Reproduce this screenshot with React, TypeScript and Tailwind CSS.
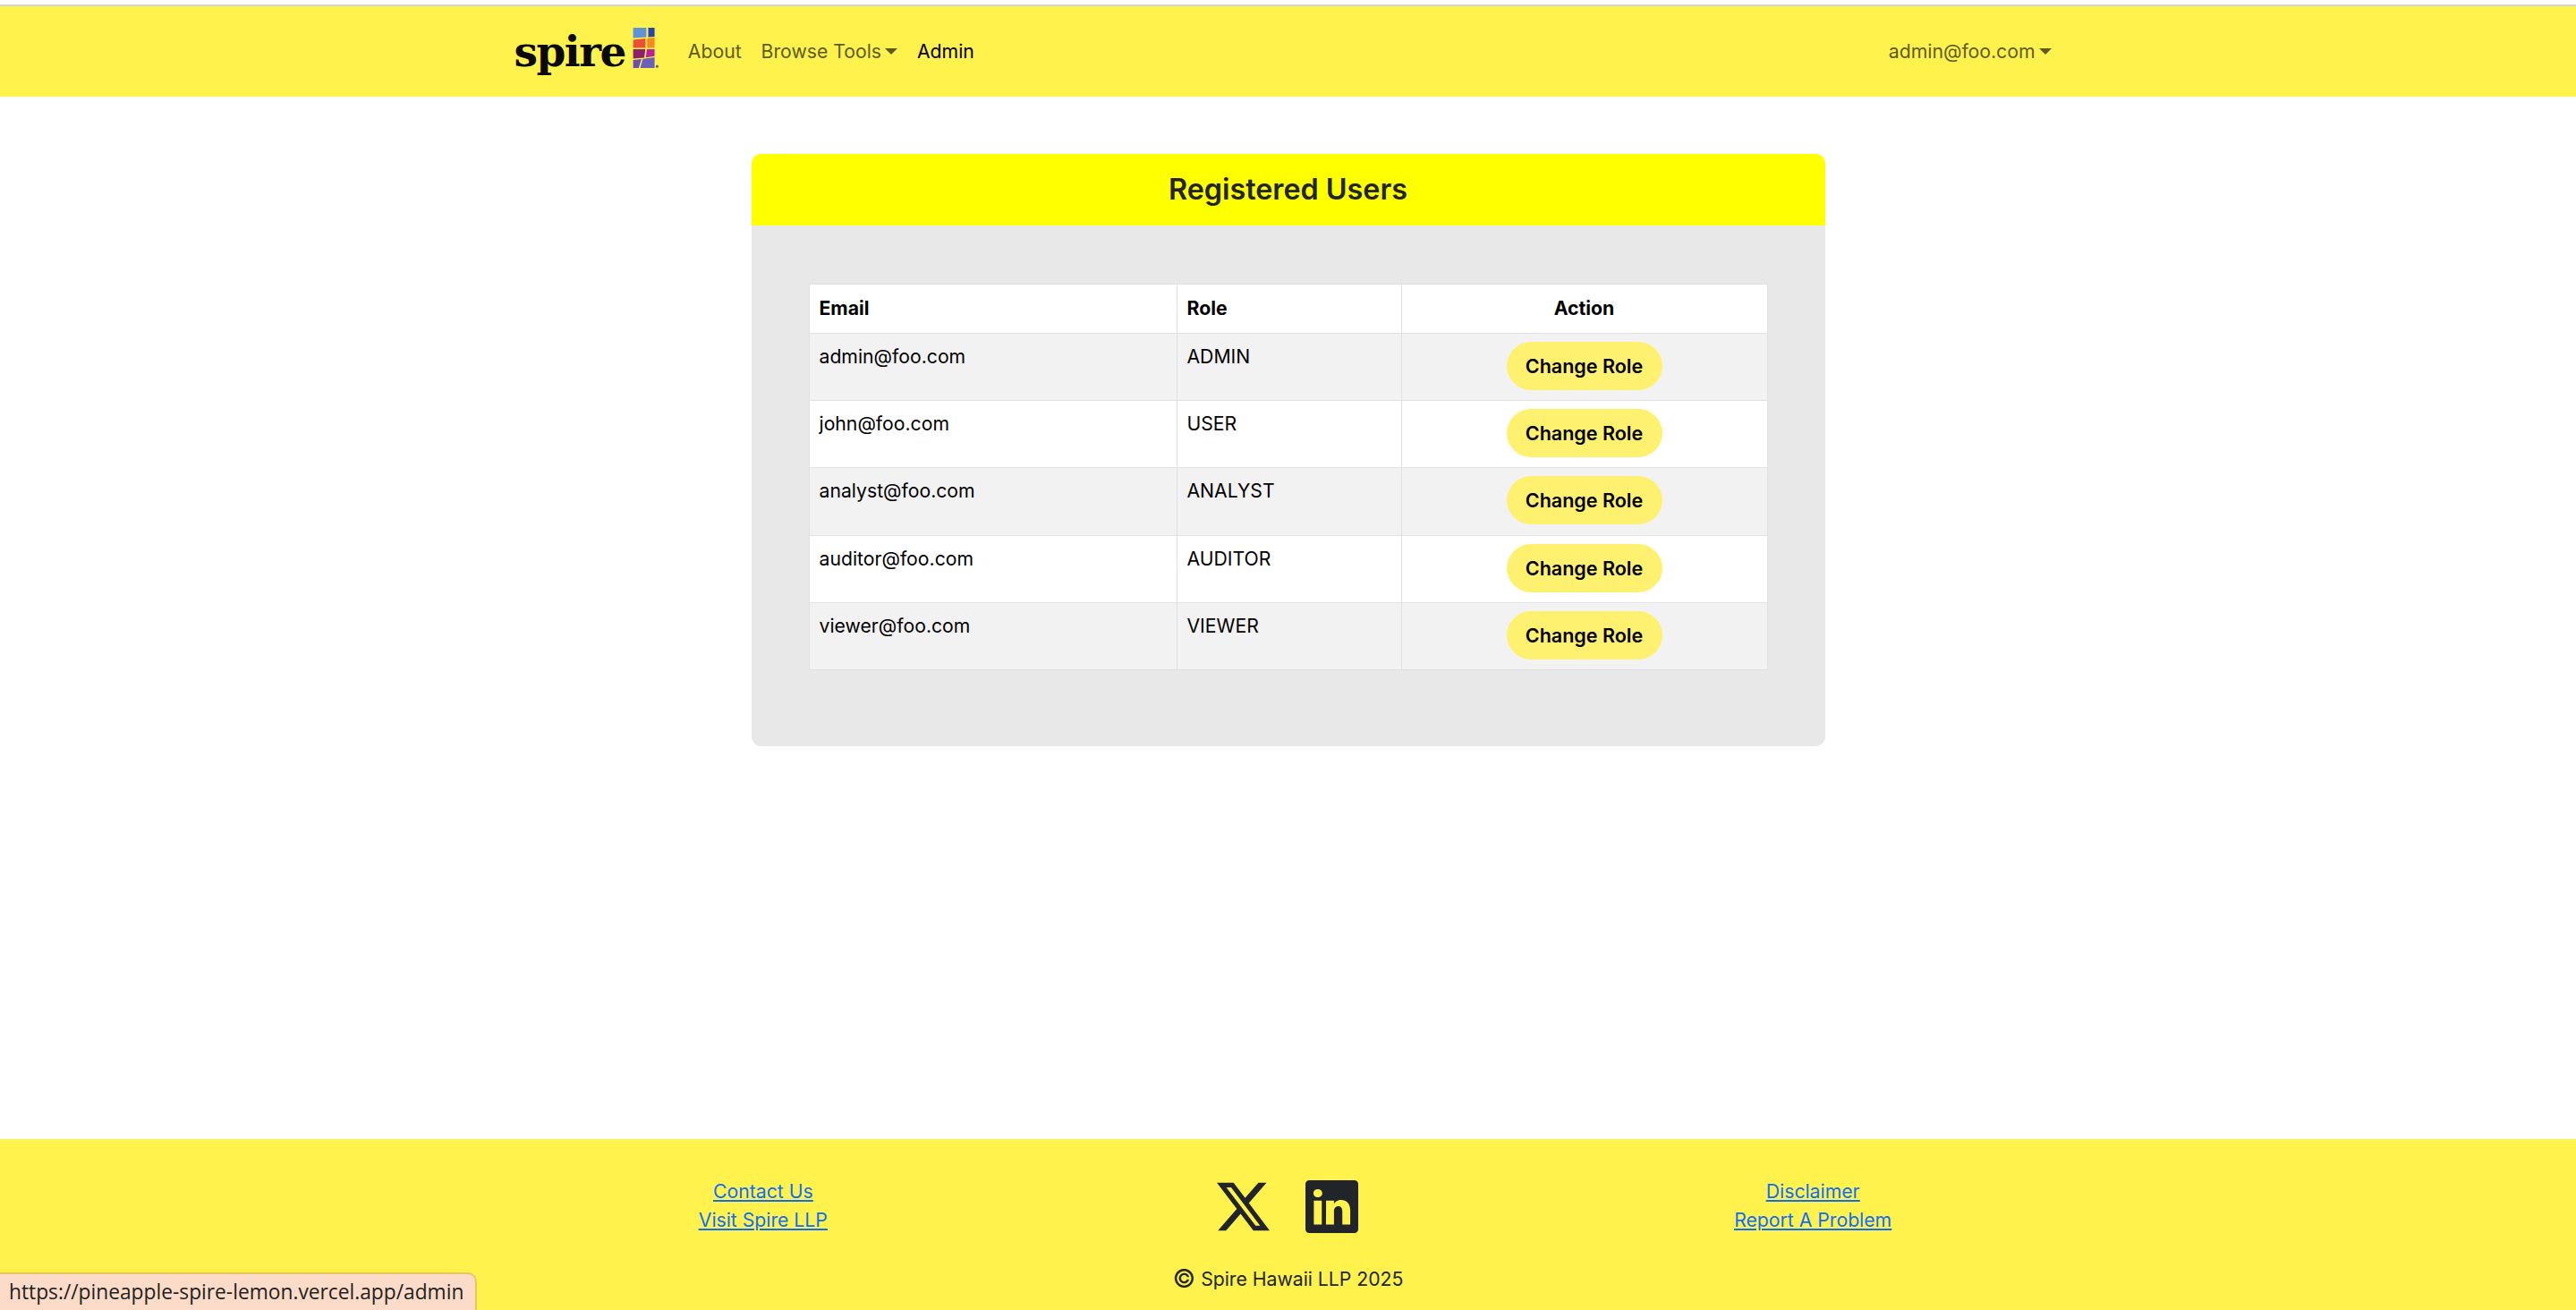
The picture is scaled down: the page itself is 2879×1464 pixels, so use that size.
import React from "react";
import { BsTwitterX, BsLinkedin } from "react-icons/bs";

const users = [
  ["admin@foo.com", "ADMIN"],
  ["john@foo.com", "USER"],
  ["analyst@foo.com", "ANALYST"],
  ["auditor@foo.com", "AUDITOR"],
  ["viewer@foo.com", "VIEWER"],
];

function Caret() {
  return <span className="ml-[4px] inline-block align-[4px] border-x-[7px] border-t-[7px] border-x-transparent border-t-current" />;
}

function Logo() {
  return (
    <div className="flex items-start">
      <span className="font-['DejaVu_Serif',serif] font-bold text-[47px] leading-[52px] tracking-[-1.5px] text-[#0a0a0a]">spire</span>
      <svg viewBox="0 0 30 48" className="w-[30px] h-[46px] ml-[8px] mt-[-1px]">
        <polygon points="0,0 15.4,0 15.4,11 0,12" fill="#5f92d6" />
        <polygon points="17.6,0 25,0 25,10.5 17.6,11" fill="#2746a8" />
        <polygon points="0,14 14.5,12.6 14.5,23.5 0,23.5" fill="#ea5036" />
        <polygon points="16.3,12.4 25,11.5 25,23.5 16.3,23.5" fill="#f58b1c" />
        <polygon points="0,25 14.2,25 13,35 0,36" fill="#8e1f6c" />
        <polygon points="16,25 25,25 25,33 14.8,34.6" fill="#b8209c" />
        <polygon points="0,37.5 9.7,36.5 6.5,47 0,47" fill="#6d4fb0" />
        <polygon points="11.3,36.3 25,34.5 25,47 8.3,47" fill="#6a62b8" />
        <circle cx="28" cy="45" r="1.6" fill="#666" />
      </svg>
    </div>
  );
}

export default function App() {
  return (
    <div className="relative min-h-screen flex flex-col bg-white font-['Inter',sans-serif] text-[21.2px] text-[#212529]">
      <div className="h-[5px] bg-white" />
      <div className="h-[2px] bg-[#d4d4d4]" />
      <nav className="h-[101px] bg-[#fff24d]">
        <div className="mx-auto w-[1760px] h-full px-[15px] flex items-center justify-between">
          <div className="flex items-center">
            <Logo />
            <div className="ml-[32px] flex items-center gap-[22px] text-[#5d5c1f]">
              <span>About</span>
              <span>Browse Tools<Caret /></span>
              <span className="text-black">Admin</span>
            </div>
          </div>
          <div className="mr-[12px] text-[#5d5c1f]">
            admin@foo.com<Caret />
          </div>
        </div>
      </nav>

      <main className="flex-1 pt-[64px]">
        <div className="mx-auto w-[1200px] rounded-[11px] overflow-hidden bg-[#e8e8e8]">
          <div className="h-[80px] bg-[#ffff00] flex items-center justify-center text-[32.3px] font-semibold text-[#212529]">
            Registered Users
          </div>
          <div className="pt-[65px] pb-[85px] px-[64px]">
            <table className="w-[1071px] table-fixed border-collapse text-black">
              <colgroup>
                <col className="w-[411px]" />
                <col className="w-[251px]" />
                <col className="w-[409px]" />
              </colgroup>
              <thead>
                <tr className="bg-white h-[55px]">
                  <th className="border border-[#dee2e6] px-[11px] text-left font-bold">Email</th>
                  <th className="border border-[#dee2e6] px-[11px] text-left font-bold">Role</th>
                  <th className="border border-[#dee2e6] px-[11px] text-center font-bold">Action</th>
                </tr>
              </thead>
              <tbody>
                {users.map(([email, role], i) => (
                  <tr key={email} className={i % 2 === 0 ? "bg-[#f2f2f2]" : "bg-white"}>
                    <td className="h-[75.2px] border border-[#dee2e6] px-[11px] pt-[10px] align-top">{email}</td>
                    <td className="h-[75.2px] border border-[#dee2e6] px-[11px] pt-[10px] align-top">{role}</td>
                    <td className="h-[75.2px] border border-[#dee2e6] px-[11px] pb-[2px] text-center align-middle">
                      <button className="w-[174px] h-[54px] rounded-full bg-[#fff170] font-semibold text-[21.5px] text-black">
                        Change Role
                      </button>
                    </td>
                  </tr>
                ))}
              </tbody>
            </table>
          </div>
        </div>
      </main>

      <footer className="h-[191px] bg-[#fff24d] pt-[42px]">
        <div className="mx-auto w-[1760px] grid grid-cols-3 items-start">
          <div className="flex flex-col items-center leading-[32px] text-[#0d6efd] underline">
            <a>Contact Us</a>
            <a>Visit Spire LLP</a>
          </div>
          <div className="flex items-center justify-center gap-[40px] mt-[4px] text-[#212529]">
            <BsTwitterX className="w-[59px] h-[59px]" />
            <BsLinkedin className="w-[59px] h-[59px]" />
          </div>
          <div className="flex flex-col items-center leading-[32px] text-[#0d6efd] underline">
            <a>Disclaimer</a>
            <a>Report A Problem</a>
          </div>
        </div>
        <div className="mt-[34px] text-center leading-[32px] text-[#212529]">
          <span className="text-[28px] leading-none align-[-2px]">©</span> Spire Hawaii LLP 2025
        </div>
      </footer>

      <div className="absolute left-0 bottom-0 w-[533px] h-[42px] rounded-tr-[10px] border-t-2 border-r-2 border-[#ecc65c] bg-[#fcdcc8] pl-[10px] font-['Open_Sans',sans-serif] text-[22.75px] leading-[40px] text-[#222]">
        https://pineapple-spire-lemon.vercel.app/admin
      </div>
    </div>
  );
}
